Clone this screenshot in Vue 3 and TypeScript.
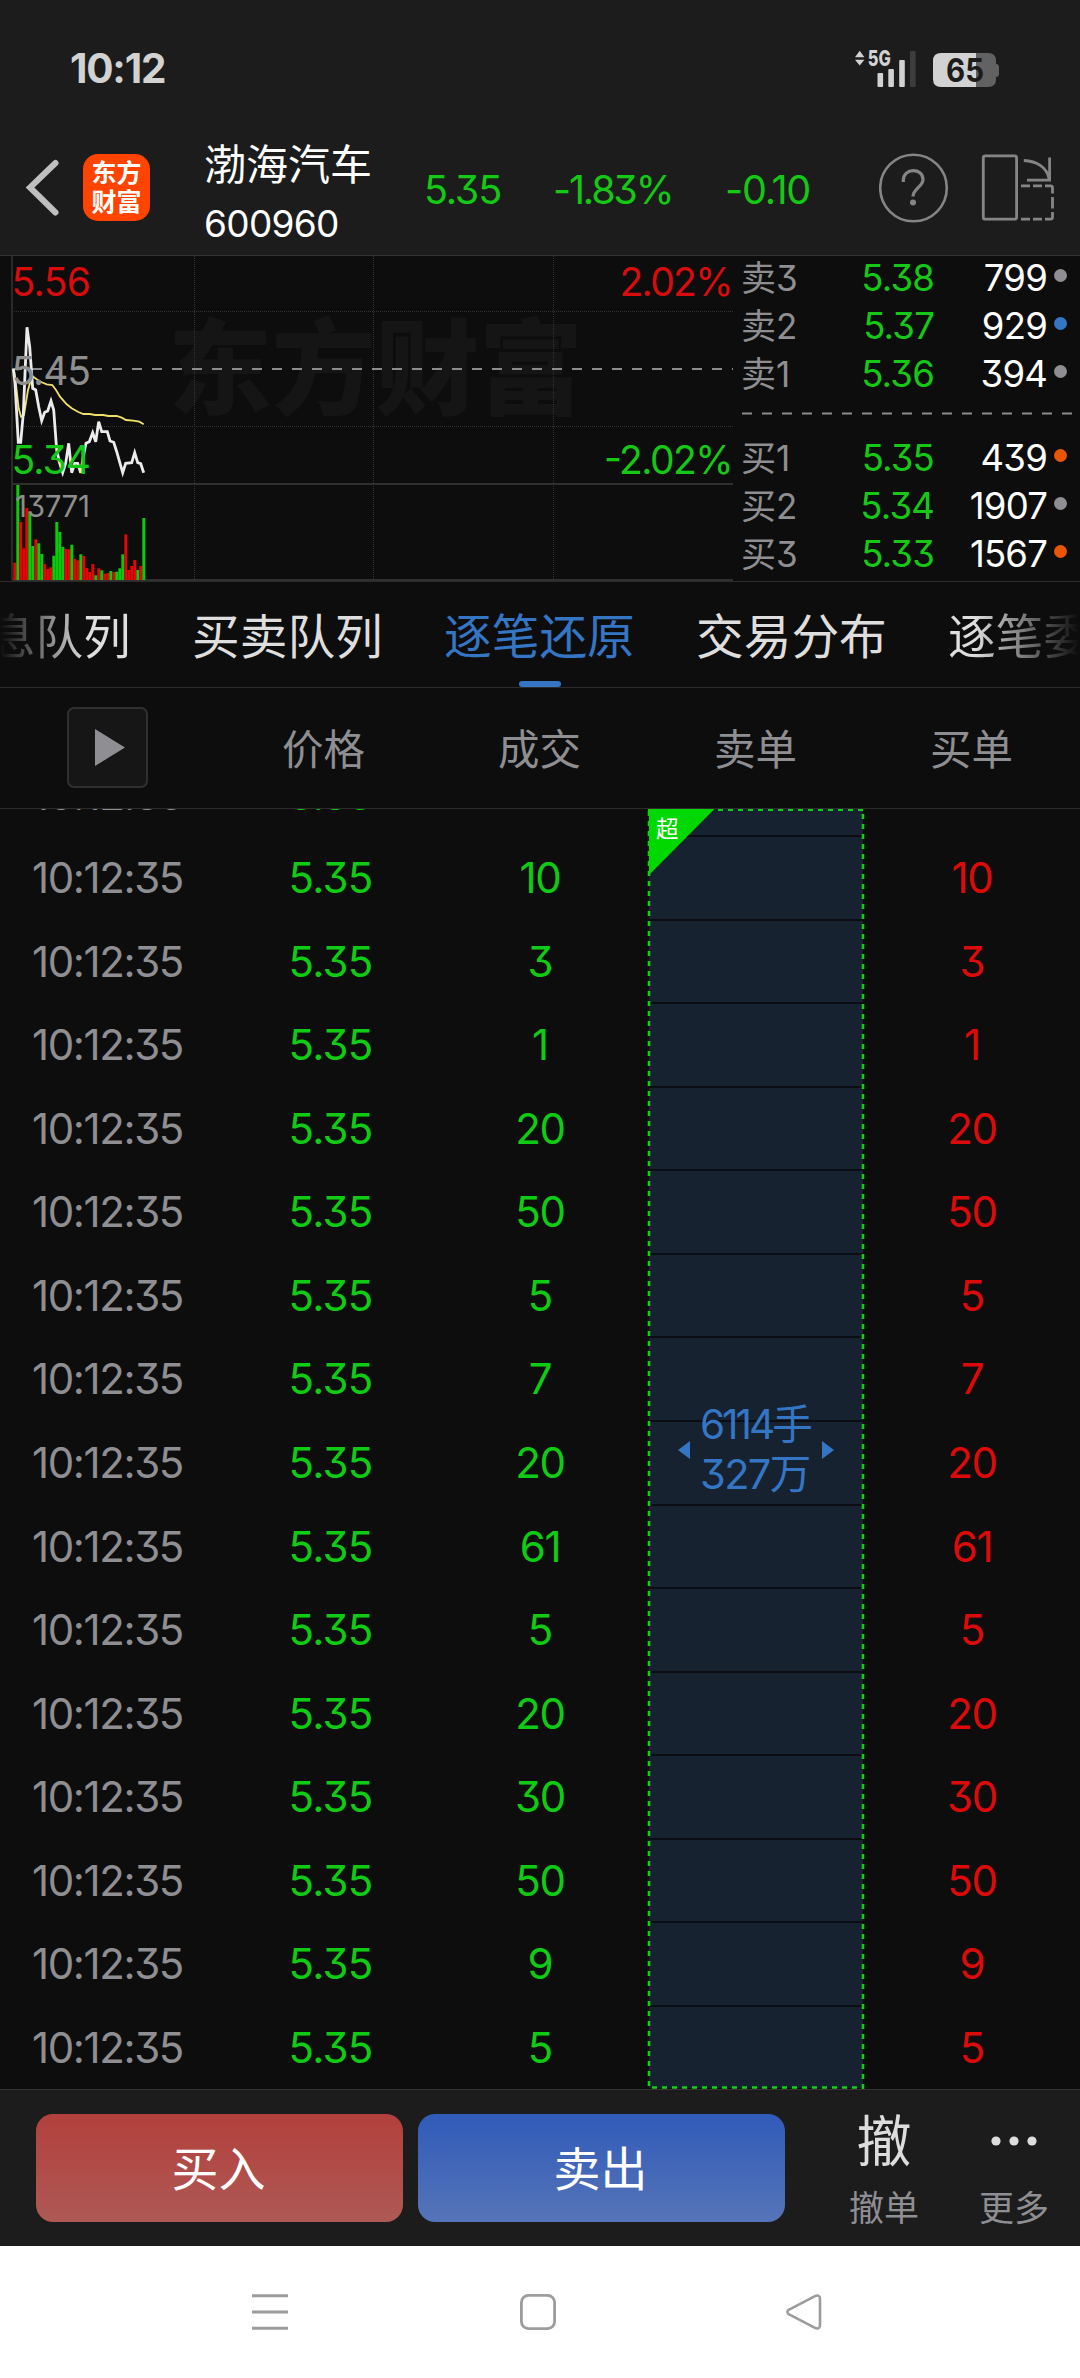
<script setup lang="ts">
interface BookRow {
  label: string
  price: string
  volume: string
  tone: 'gray' | 'blue' | 'orange'
}

const sells: BookRow[] = [
  { label: '卖3', price: '5.38', volume: '799', tone: 'gray' },
  { label: '卖2', price: '5.37', volume: '929', tone: 'blue' },
  { label: '卖1', price: '5.36', volume: '394', tone: 'gray' },
]
const buys: BookRow[] = [
  { label: '买1', price: '5.35', volume: '439', tone: 'orange' },
  { label: '买2', price: '5.34', volume: '1907', tone: 'gray' },
  { label: '买3', price: '5.33', volume: '1567', tone: 'orange' },
]

const tabs: string[] = ['信息队列', '买卖队列', '逐笔还原', '交易分布', '逐笔委托']
const activeTab = 2

const ticks: (number | null)[] = [null, 10, 3, 1, 20, 50, 5, 7, 20, 61, 5, 20, 30, 50, 9, 5]
const separators: number[] = Array.from({ length: 15 }, (_, i) => 27 + i * 83.571)

// Minute volume: direction and height in px
const volumes: [string, number][] = [
  ['r', 17.3], ['g', 95], ['r', 58], ['r', 31.7], ['r', 72], ['g', 68], ['g', 34], ['r', 40.7],
  ['g', 36.7], ['g', 26], ['r', 16], ['r', 11], ['r', 12.7], ['g', 24.3], ['g', 58], ['g', 48],
  ['g', 33], ['r', 31], ['r', 30.7], ['g', 35.3], ['r', 21.3], ['r', 19.7], ['g', 25.7], ['r', 24],
  ['r', 12], ['r', 8], ['r', 16], ['g', 4.7], ['r', 11.7], ['g', 9.7], ['r', 6.3], ['r', 7],
  ['g', 9], ['r', 8], ['g', 8.3], ['g', 11.7], ['g', 25.7], ['r', 45.7], ['r', 10], ['r', 14],
  ['r', 20], ['g', 10], ['r', 14], ['g', 62],
]

const toPoints = (pts: number[][]): string =>
  pts.map(([x, y]) => `${(x / 3).toFixed(1)},${(y / 3 - 6).toFixed(1)}`).join(' ')

const priceLine = toPoints([
  [40, 357], [45, 400], [55, 577], [62, 577], [70, 490], [81, 232], [89, 290], [98, 415], [107, 420],
  [116, 470], [125, 512], [134, 487], [143, 483], [153, 453], [161, 480], [170, 600], [179, 640],
  [188, 668], [197, 640], [206, 580], [215, 668], [224, 640], [233, 640], [242, 668], [250, 620],
  [258, 580], [268, 575], [278, 548], [287, 575], [296, 515], [305, 545], [322, 545], [330, 573],
  [341, 577], [350, 605], [368, 668], [377, 640], [395, 638], [404, 608], [413, 638], [422, 641], [431, 668],
])
const averageLine = toPoints([
  [42, 360], [46, 385], [56, 475], [63, 500], [72, 495], [84, 420], [92, 392], [100, 380], [110, 388],
  [125, 397], [140, 403], [157, 405], [168, 420], [180, 440], [200, 463], [215, 475], [235, 486],
  [250, 492], [270, 492], [285, 495], [310, 495], [325, 498], [350, 498], [365, 503], [378, 510],
  [400, 512], [418, 515], [431, 523],
])
</script>

<template>
  <div class="screen">
    <div class="status">
      <span class="clock">10:12</span>
      <svg class="status-icons" width="150" height="60" viewBox="850 40 150 60">
        <path d="M855 57.2L859.7 50.8L864.4 57.2ZM855 59.7L859.7 65.4L864.4 59.7Z" fill="#d2d2d2" />
        <text x="867.8" y="66.2" class="net" textLength="23" lengthAdjust="spacingAndGlyphs">5G</text>
        <rect x="877.5" y="73" width="5.6" height="14" rx="1" fill="#d2d2d2" />
        <rect x="888.3" y="69" width="5.6" height="18" rx="1" fill="#d2d2d2" />
        <rect x="899.2" y="60" width="5.6" height="27" rx="1" fill="#d2d2d2" />
        <rect x="910" y="51" width="5.6" height="36" rx="1" fill="#3d3d3d" />
        <path d="M976 53H988Q996 53 996 61V64Q999 64 999 67V74Q999 77 996 77V79Q996 87 988 87H976Z" fill="#626262" />
        <path d="M976 53H941Q933 53 933 61V79Q933 87 941 87H976Z" fill="#d2d2d2" />
        <text x="946" y="82" class="level" textLength="38" lengthAdjust="spacingAndGlyphs">65</text>
      </svg>
    </div>

    <header class="header">
      <svg class="back" width="83" height="67" viewBox="0 154 83 67">
        <path d="M55.5 163L30 187.5L55.5 212.5" fill="none" stroke="#bfbfbf" stroke-width="6" stroke-linecap="round" stroke-linejoin="miter" />
      </svg>
      <div class="logo"><span>东方</span><span>财富</span></div>
      <div class="stock">
        <div class="name">渤海汽车</div>
        <div class="code">600960</div>
      </div>
      <div class="quote">5.35</div>
      <div class="quote pct">-1.83%</div>
      <div class="quote diff">-0.10</div>
      <svg width="70" height="70" viewBox="0 0 70 70" fill="none" stroke="#858585">
        <circle cx="34.5" cy="35" r="33.3" stroke-width="2.6" />
        <path d="M24.3 29V27.5C24.3 14.5 44 14.5 44 26.5C44 33.5 34 36 34 43.5" stroke-width="3.2" />
        <circle cx="34" cy="49.4" r="3" fill="#858585" stroke="none" />
      </svg>
      <svg class="rotate" width="74" height="70" viewBox="981 152.5 74 70" fill="none" stroke="#858585" stroke-width="2.8">
        <rect x="983.3" y="155.4" width="33.3" height="63.3" rx="2" />
        <path d="M1023.8 160C1037 160.5 1047 167 1049 178M1049.6 157V180M1027 179.6H1051" />
        <path d="M1021 185.4H1030M1033 185.4H1042M1045 185.4H1050.5Q1052.5 185.4 1052.5 187.4V193M1052.5 196.5V208M1052.5 211.5V216.5Q1052.5 218.6 1050.5 218.6H1045M1042 218.6H1033M1030 218.6H1021" />
      </svg>
    </header>

    <section class="market">
      <svg class="chart" width="733" height="325" viewBox="0 0 733 325">
        <text x="168" y="151" class="watermark" textLength="415" lengthAdjust="spacing">东方财富</text>
        <g stroke="#333" stroke-width="1" stroke-dasharray="1 1">
          <path d="M12 55.5H733M12 170.5H733M194.5 0V324M373.5 0V324M553.5 0V324" />
        </g>
        <path d="M12 0V324" stroke="#2a2a2a" stroke-width="2" />
        <path d="M12 228H733M12 324H733" stroke="#2f2f2f" stroke-width="2" />
        <path d="M12 113H733" stroke="#8c8c8c" stroke-width="2" stroke-dasharray="10 10" />
        <rect v-for="(v, i) in volumes" :key="i" :x="13.3 + i * 3" :y="324 - v[1]" width="3" :height="v[1]" :fill="v[0] === 'r' ? '#e20606' : '#0bc90b'" />
        <polyline :points="averageLine" fill="none" stroke="#efe06a" stroke-width="1.8" />
        <polyline :points="priceLine" fill="none" stroke="#ececec" stroke-width="2.8" />
        <text x="11.5" y="39.8" class="axis red" textLength="79.5">5.56</text>
        <text x="11.5" y="128.6" class="axis gray" textLength="79.5">5.45</text>
        <text x="11.5" y="217.8" class="axis green" textLength="79.5">5.34</text>
        <text x="15" y="261" class="axis small" textLength="75">13771</text>
        <text x="619.5" y="39.8" class="axis red" textLength="114">2.02%</text>
        <text x="604" y="217.8" class="axis green" textLength="129.5">-2.02%</text>
      </svg>
      <div class="book">
        <div v-for="r in sells" :key="r.label" class="book-row">
          <span class="book-label">{{ r.label }}</span>
          <span class="book-price">{{ r.price }}</span>
          <span class="book-volume">{{ r.volume }}</span>
          <i class="dot" :class="r.tone"></i>
        </div>
        <svg class="spread" width="331" height="36"><path d="M0 15.5H331" stroke="#8c8c8c" stroke-width="2" stroke-dasharray="10 10" /></svg>
        <div v-for="r in buys" :key="r.label" class="book-row">
          <span class="book-label">{{ r.label }}</span>
          <span class="book-price">{{ r.price }}</span>
          <span class="book-volume">{{ r.volume }}</span>
          <i class="dot" :class="r.tone"></i>
        </div>
      </div>
    </section>

    <nav class="tabs">
      <div v-for="(t, i) in tabs" :key="t" class="tab" :class="{ active: i === activeTab }">{{ t }}</div>
    </nav>

    <div class="columns">
      <div>
        <button class="play" type="button">
          <svg width="30" height="37" viewBox="0 0 30 37"><path d="M0 0L30 18.5L0 37Z" fill="#8e8e93" /></svg>
        </button>
      </div>
      <div>价格</div>
      <div>成交</div>
      <div>卖单</div>
      <div>买单</div>
    </div>

    <main class="ticks">
      <div v-for="(n, i) in ticks" :key="i" class="tick">
        <span class="time">10:12:35</span>
        <span class="price">5.35</span>
        <span class="deal">{{ n }}</span>
        <span></span>
        <span class="bid">{{ n }}</span>
      </div>
      <div class="order">
        <svg class="order-frame" width="218" height="1280" viewBox="0 0 218 1280">
          <rect x="2" y="0" width="214" height="1279" fill="#162230" />
          <path v-for="y in separators" :key="y" :d="`M2 ${Math.round(y)}H216`" stroke="#0a0e12" stroke-width="2" />
          <g stroke="#12d016" stroke-dasharray="5 5" fill="none">
            <path d="M1 1H216" stroke-width="2" />
            <path d="M216 5V1280" stroke-width="2.6" />
            <path d="M5 1278.5H216" stroke-width="2.4" />
            <path d="M2 2V1279" stroke-width="2.6" />
          </g>
          <path d="M2 0H67.5L2 66Z" fill="#00d800" />
        </svg>
        <span class="badge">超</span>
        <div class="order-info">
          <svg width="12" height="18"><path d="M12 0V18L0 9Z" fill="#3475c4" /></svg>
          <div class="order-text">
            <div class="lots">6114手</div>
            <div class="amount">327万</div>
          </div>
          <svg width="12" height="18"><path d="M0 0V18L12 9Z" fill="#3475c4" /></svg>
        </div>
      </div>
    </main>

    <footer class="actions">
      <button class="trade buy" type="button">买入</button>
      <button class="trade sell" type="button">卖出</button>
      <div class="action cancel">
        <div class="glyph">撤</div>
        <div class="caption">撤单</div>
      </div>
      <div class="action more">
        <div class="glyph">
          <svg width="46" height="10"><g fill="#ddd"><circle cx="5" cy="5" r="4.6" /><circle cx="23" cy="5" r="4.6" /><circle cx="41" cy="5" r="4.6" /></g></svg>
        </div>
        <div class="caption">更多</div>
      </div>
    </footer>

    <div class="system">
      <svg width="36" height="36" viewBox="0 0 36 36"><path d="M0 1.7H36M0 18H36M0 34.3H36" stroke="#9c9c9c" stroke-width="3" /></svg>
      <svg width="36" height="36" viewBox="0 0 36 36"><rect x="1.4" y="1.4" width="33.2" height="33.2" rx="7" fill="none" stroke="#9c9c9c" stroke-width="2.8" /></svg>
      <svg class="nav-back" width="36" height="36" viewBox="0 0 36 36"><path d="M2.6 15.8L29.5 1.9Q34 .5 34 5V31Q34 35.5 29.5 34.1L2.6 20.2Q.2 18 2.6 15.8Z" fill="none" stroke="#9c9c9c" stroke-width="2.6" stroke-linejoin="round" /></svg>
    </div>
  </div>
</template>

<style>
body {
  background: #0d0d0d;
}
</style>

<style scoped>
.screen {
  width: 1080px;
  height: 2378px;
  overflow: hidden;
  background: #0d0d0d;
  font-family: Inter, "Noto Sans CJK SC", sans-serif;
  font-feature-settings: "cv09" 1;
  display: flex;
  flex-direction: column;
}
.screen > * {
  box-sizing: border-box;
  flex-shrink: 0;
}
svg {
  display: block;
}
.status {
  height: 120px;
  background: #1c1c1c;
  display: flex;
  justify-content: space-between;
  align-items: center;
  padding: 17px 80px 0 70px;
}
.clock {
  font-size: 40.5px;
  font-weight: 700;
  line-height: 48px;
  letter-spacing: -1.2px;
  color: #d2d2d2;
}
.status-icons {
  margin-top: 3px;
}
.net {
  font-size: 22px;
  font-weight: 800;
  fill: #d2d2d2;
}
.level {
  font-size: 32px;
  font-weight: 700;
  fill: #1c1c1c;
}
.header {
  height: 136px;
  background: #1c1c1c;
  border-bottom: 1px solid #333;
  display: grid;
  grid-template-columns: 83px 67px 54px 220px 129px 172px 154px 102px 1fr;
  align-items: center;
}
.logo {
  height: 67px;
  border-radius: 15px;
  background: #ff4400;
  color: #fff;
  font-size: 25px;
  font-weight: 700;
  line-height: 29px;
  display: flex;
  flex-direction: column;
  align-items: center;
  justify-content: center;
}
.stock {
  grid-column: 4;
  color: #fff;
  line-height: 58.5px;
  padding-top: 14px;
}
.name {
  font-size: 42px;
}
.code {
  font-size: 37px;
  letter-spacing: -0.7px;
}
.quote {
  font-size: 39.5px;
  line-height: 48px;
  padding-top: 4px;
  color: #15c815;
  letter-spacing: -1.2px;
}
.pct {
  letter-spacing: -2.2px;
}
.market {
  height: 326px;
  border-bottom: 1px solid #2c2c2c;
  display: flex;
}
.watermark {
  font-size: 104px;
  font-weight: 900;
  fill: #151515;
}
.axis {
  font-size: 39px;
}
.axis.small {
  font-size: 29.5px;
  fill: #8e8e8e;
}
.red {
  fill: #d80c0c;
}
.green {
  fill: #15c815;
}
.axis.gray {
  fill: #8e8e8e;
}
.book {
  flex: 1;
  margin-top: -2.5px;
  padding-left: 9px;
}
.book-row {
  height: 48px;
  line-height: 48px;
  font-size: 36.5px;
  display: grid;
  grid-template-columns: 90px 102px 113px 1fr;
  align-items: center;
}
.book-label {
  font-size: 35px;
  color: #8e8e93;
  margin-left: -1px;
}
.book-price {
  color: #15c815;
  text-align: right;
  letter-spacing: -0.8px;
}
.book-volume {
  color: #fff;
  text-align: right;
  letter-spacing: -0.8px;
}
.dot {
  width: 13px;
  height: 13px;
  border-radius: 50%;
  margin: -5px 0 0 7px;
}
.dot.gray {
  background: #8e8e93;
}
.dot.blue {
  background: #3475c4;
}
.dot.orange {
  background: #ea5504;
}
.tabs {
  height: 106px;
  border-bottom: 1px solid #2c2c2c;
  display: flex;
  gap: 61px;
  margin-left: -60px;
  width: 1140px;
  overflow: hidden;
}
.tab {
  flex: none;
  width: 191px;
  height: 105px;
  box-sizing: border-box;
  padding-top: 25px;
  line-height: 60px;
  font-size: 47.7px;
  white-space: nowrap;
  color: #dedede;
  position: relative;
}
.tab.active {
  color: #3475c4;
}
.tab.active::after {
  content: "";
  position: absolute;
  left: 75px;
  bottom: 0;
  width: 42px;
  height: 6px;
  border-radius: 3px;
  background: #3475c4;
}
.tab:first-child {
  color: transparent;
  background: linear-gradient(90deg, #0d0d0d 60px, #dedede 145px);
  background-clip: text;
  -webkit-background-clip: text;
}
.tab:last-child {
  color: transparent;
  background: linear-gradient(90deg, #dedede 26px, #0d0d0d 131px);
  background-clip: text;
  -webkit-background-clip: text;
}
.columns {
  height: 121px;
  border-bottom: 1px solid #2c2c2c;
  display: grid;
  grid-template-columns: repeat(5, 216px);
  align-items: center;
  text-align: center;
  font-size: 41.5px;
  line-height: 60px;
  color: #8e8e93;
}
.columns > div {
  padding-top: 4px;
  margin-left: -1px;
}
.columns > div:first-child {
  padding: 0 0 1px;
}
.play {
  width: 81px;
  height: 81px;
  margin: 0 auto;
  padding: 0 0 0 5px;
  border: 2px solid #303030;
  border-radius: 7px;
  background: #161616;
  display: flex;
  align-items: center;
  justify-content: center;
}
.ticks {
  height: 1280px;
  overflow: hidden;
  position: relative;
  display: flex;
  flex-direction: column;
}
.tick {
  flex: none;
  height: 83.571px;
  line-height: 83.571px;
  font-size: 42px;
  letter-spacing: -1.2px;
  text-align: center;
  display: grid;
  grid-template-columns: repeat(5, 216px);
}
.tick:first-child {
  margin-top: -55.9px;
  margin-bottom: -0.6px;
}
.time {
  color: #8e8e93;
  letter-spacing: -1.4px;
  padding-right: 1px;
}
.price {
  color: #0fcb13;
  padding-left: 13px;
  letter-spacing: -0.8px;
}
.deal {
  color: #0fcb13;
}
.bid {
  color: #dc0a0a;
}
.order {
  position: absolute;
  left: 647px;
  top: 0;
  width: 218px;
  height: 1280px;
}
.order-frame {
  position: absolute;
  left: 0;
  top: 0;
}
.badge {
  position: absolute;
  left: 9px;
  top: 8px;
  font-size: 22.5px;
  line-height: 24px;
  color: #fff;
}
.order-info {
  position: absolute;
  left: 31px;
  top: 592px;
  width: 156px;
  display: flex;
  align-items: center;
  color: #3475c4;
}
.order-text {
  width: 122px;
  padding-left: 10px;
  box-sizing: border-box;
  margin-right: 10px;
  white-space: nowrap;
  line-height: 48.5px;
}
.order-info svg {
  flex: none;
}
.lots {
  font-size: 40.5px;
  letter-spacing: -3px;
}
.amount {
  font-size: 41.5px;
  letter-spacing: -1.6px;
}
.actions {
  height: 157px;
  background: #1c1c1c;
  border-top: 1px solid #333;
  padding: 24px 0 0 36px;
  display: flex;
}
.trade {
  width: 367px;
  height: 108px;
  border: 0;
  border-radius: 17px;
  padding: 0 2px 0 0;
  margin-right: 15px;
  color: #fff;
  font-family: inherit;
  font-size: 47px;
  line-height: 110px;
}
.buy {
  background: linear-gradient(#b3403c, #ae5955);
}
.sell {
  background: linear-gradient(#305bb8, #5674b8);
}
.action {
  width: 130px;
  text-align: center;
}
.cancel {
  margin-left: 19px;
}
.glyph {
  height: 54px;
  line-height: 54px;
  font-size: 55px;
  color: #ddd;
  display: flex;
  justify-content: center;
  align-items: center;
}
.caption {
  margin-top: 16px;
  line-height: 48px;
  font-size: 35px;
  color: #8e8e93;
}
.system {
  height: 132px;
  background: #fff;
  display: flex;
  gap: 232px;
  padding: 48px 0 0 252px;
}
.nav-back {
  margin-left: -2px;
}
</style>
